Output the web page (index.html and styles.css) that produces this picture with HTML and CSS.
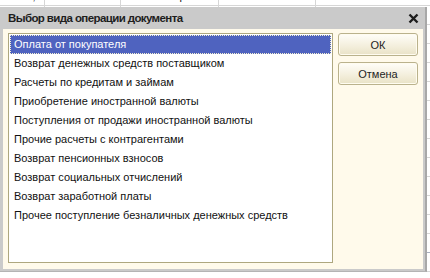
FILE: index.html
```html
<!DOCTYPE html>
<html lang="ru">
<head>
  <meta charset="UTF-8" />
  <title>Выбор вида операции документа</title>
  <link rel="stylesheet" href="styles.css">
</head>
<body>
  <div class="grid">
    <div class="row">
      <div class="cell c1 num">5 000,00</div>
      <div class="cell c2">КЕТ</div>
      <div class="cell c3">Основной расч...</div>
      <div class="cell c4">АР Полюс 100</div>
      <div class="cell c5"></div>
    </div>
    <div class="row"><div class="cell c1"></div><div class="cell c2"></div><div class="cell c3"></div><div class="cell c4"></div><div class="cell c5"></div></div>
    <div class="row"><div class="cell c1"></div><div class="cell c2"></div><div class="cell c3"></div><div class="cell c4"></div><div class="cell c5"></div></div>
    <div class="row"><div class="cell c1"></div><div class="cell c2"></div><div class="cell c3"></div><div class="cell c4"></div><div class="cell c5"></div></div>
    <div class="row"><div class="cell c1"></div><div class="cell c2"></div><div class="cell c3"></div><div class="cell c4"></div><div class="cell c5"></div></div>
    <div class="row"><div class="cell c1"></div><div class="cell c2"></div><div class="cell c3"></div><div class="cell c4"></div><div class="cell c5"></div></div>
    <div class="row"><div class="cell c1"></div><div class="cell c2"></div><div class="cell c3"></div><div class="cell c4"></div><div class="cell c5"></div></div>
    <div class="row"><div class="cell c1"></div><div class="cell c2"></div><div class="cell c3"></div><div class="cell c4"></div><div class="cell c5"></div></div>
    <div class="row"><div class="cell c1"></div><div class="cell c2"></div><div class="cell c3"></div><div class="cell c4"></div><div class="cell c5"></div></div>
    <div class="row"><div class="cell c1"></div><div class="cell c2"></div><div class="cell c3"></div><div class="cell c4"></div><div class="cell c5"></div></div>
    <div class="row"><div class="cell c1"></div><div class="cell c2"></div><div class="cell c3"></div><div class="cell c4"></div><div class="cell c5"></div></div>
    <div class="row"><div class="cell c1"></div><div class="cell c2"></div><div class="cell c3"></div><div class="cell c4"></div><div class="cell c5"></div></div>
    <div class="row"><div class="cell c1"></div><div class="cell c2"></div><div class="cell c3"></div><div class="cell c4"></div><div class="cell c5"></div></div>
    <div class="row current"><div class="cell c1"></div><div class="cell c2"></div><div class="cell c3"></div><div class="cell c4"></div><div class="cell c5"></div></div>
    <div class="row"><div class="cell c1"></div><div class="cell c2"></div><div class="cell c3"></div><div class="cell c4"></div><div class="cell c5"></div></div>
  </div>

  <div class="dialog">
    <div class="title">
      <span>Выбор вида операции документа</span>
      <svg class="close" width="11" height="11" viewBox="0 0 11 11">
        <path d="M1.5 1.5 L9.5 9.5 M9.5 1.5 L1.5 9.5" stroke="#1c1c1c" stroke-width="2.4" />
      </svg>
    </div>
    <div class="body">
      <div class="list">
        <div class="item selected">Оплата от покупателя</div>
        <div class="item">Возврат денежных средств поставщиком</div>
        <div class="item">Расчеты по кредитам и займам</div>
        <div class="item">Приобретение иностранной валюты</div>
        <div class="item">Поступления от продажи иностранной валюты</div>
        <div class="item">Прочие расчеты с контрагентами</div>
        <div class="item">Возврат пенсионных взносов</div>
        <div class="item">Возврат социальных отчислений</div>
        <div class="item">Возврат заработной платы</div>
        <div class="item">Прочее поступление безналичных денежных средств</div>
      </div>
      <div class="buttons">
        <button class="btn">ОК</button>
        <button class="btn">Отмена</button>
      </div>
    </div>
  </div>
</body>
</html>
```

FILE: styles.css
```css
body {
  margin: 0;
  background-color: white;
  font-family: "Liberation Sans", Arial, sans-serif;
  font-size: 11px;
  color: #1a1a1a;
  overflow: hidden;
}

.grid {
  margin-top: -13px;
}

.row {
  display: flex;
  height: 19px;
  border-bottom: 1px solid #d6d6d6;
  box-sizing: border-box;
}

.row.current {
  border-bottom-color: #a9b0c0;
}

.cell {
  border-right: 1px solid #d6d6d6;
  box-sizing: border-box;
  padding: 3px 4px 0 5px;
  white-space: nowrap;
  overflow: hidden;
}

.c1 { width: 45px; }
.c2 { width: 76px; }
.c3 { width: 98px; }
.c4 { width: 97px; }
.c5 { flex: 1; border-right: none; }

.num {
  text-align: right;
}

.dialog {
  position: absolute;
  left: 0;
  top: 7px;
  width: 427px;
  height: 265px;
  box-sizing: border-box;
  background-color: #cacaca;
  border-right: 2px solid #a8a8a8;
  border-bottom: 1px solid #b4b4b4;
  padding: 0 2px 2px 3px;
  display: flex;
  flex-direction: column;
}

.title {
  height: 22px;
  display: flex;
  align-items: center;
  justify-content: space-between;
  padding: 0 4px 0 5px;
  font-weight: bold;
  font-size: 11.5px;
  letter-spacing: -0.6px;
  color: #1e1e1e;
}

.close {
  margin-top: 1px;
}

.body {
  flex: 1;
  background-color: #fffaeb;
  display: flex;
  gap: 5px;
  padding: 4px 5px 6px 5px;
}

.list {
  width: 325px;
  box-sizing: border-box;
  border: 1px solid #aea77f;
  background-color: white;
  padding: 1px;
}

.item {
  height: 19px;
  line-height: 19px;
  padding-left: 4px;
  white-space: nowrap;
  color: #111;
}

.item.selected {
  background-color: #4f63bf;
  color: white;
  outline: 1px dotted #f4f0d0;
  outline-offset: -1px;
}

.buttons {
  width: 80px;
  display: flex;
  flex-direction: column;
  gap: 6px;
}

.btn {
  height: 23px;
  border: 1px solid #bab28c;
  border-radius: 3px;
  background: linear-gradient(#fffef9, #f3eedb 60%, #e9e2c6);
  box-shadow: inset 0 0 0 1px #fffcf0;
  font-family: "Liberation Sans", Arial, sans-serif;
  font-size: 11px;
  color: #1e1e1e;
  padding: 0;
}
```
